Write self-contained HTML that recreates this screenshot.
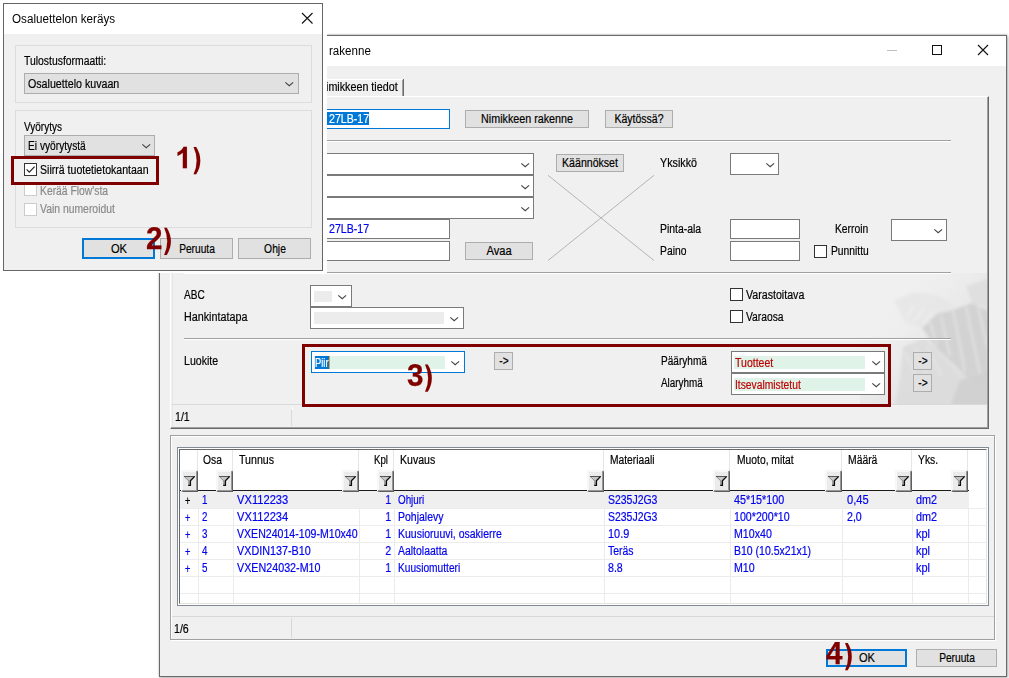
<!DOCTYPE html>
<html><head><meta charset="utf-8"><title>Osaluettelon keräys</title><style>
html,body{margin:0;padding:0;background:#fff;}
body{width:1009px;height:678px;position:relative;overflow:hidden;font-family:"Liberation Sans",sans-serif;font-size:11px;}
#r{position:absolute;left:0;top:0;width:1009px;height:678px;overflow:hidden;}
#r div{position:absolute;box-sizing:border-box;}
#r svg{position:absolute;overflow:visible;}
.t{position:absolute;white-space:pre;font-family:"Liberation Sans",sans-serif;}
.s{-webkit-text-stroke:0.2px currentColor;}
</style></head><body><div id="r">
<div style="left:159px;top:35px;width:848px;height:642px;background:#f0f0f0;border:1px solid #6a6a6a;box-shadow:1px 1px 3px rgba(0,0,0,0.30), 0 0 2px rgba(0,0,0,0.14), 0 -1px 1px rgba(0,0,0,0.08);"></div>
<div style="left:160px;top:36px;width:846px;height:30px;background:#fff;"></div>
<span class="t" id="t1" style="left:329.2px;top:43.40px;font-size:12.00px;line-height:16px;color:#000;font-weight:normal;transform:scaleX(0.9651);transform-origin:0 50%;">rakenne</span>
<div style="left:887px;top:50px;width:10px;height:1px;background:#c0c0c0;"></div>
<div style="left:932px;top:45px;width:10px;height:10px;border:1px solid #111;"></div>
<svg style="left:978px;top:45px" width="10" height="10" viewBox="0 0 10 10"><path d="M0,0 L10,10 M10,0 L0,10" stroke="#111" stroke-width="1.1" fill="none"/></svg>
<div style="left:327px;top:79px;width:75px;height:1px;background:#fff;"></div>
<span class="t s" id="t2" style="left:326.3px;top:79.49px;font-size:12.48px;line-height:16px;color:#000;font-weight:normal;transform:scaleX(0.8614);transform-origin:0 50%;">imikkeen tiedot</span>
<div style="left:403px;top:79px;width:1px;height:17px;background:#696969;"></div>
<div style="left:402px;top:80px;width:1px;height:16px;background:#a0a0a0;"></div>
<div style="left:170px;top:96px;width:819px;height:333px;background:#f0f0f0;border-top:1px solid #fff;border-left:1px solid #fff;border-right:1px solid #696969;border-bottom:1px solid #696969;"></div>
<div style="left:171px;top:97px;width:817px;height:331px;border-right:1px solid #a0a0a0;border-bottom:1px solid #a0a0a0;"></div>
<div style="left:172px;top:273px;width:1px;height:154px;background:#e6e6e6;"></div>
<svg style="left:860px;top:273px" width="127" height="131" viewBox="860 273 127 131">
<defs><filter id="wb" x="-20%" y="-20%" width="140%" height="140%"><feGaussianBlur stdDeviation="1.6"/></filter>
<linearGradient id="wg" x1="0" y1="0" x2="1" y2="1"><stop offset="0.25" stop-color="#e8e8e8" stop-opacity="0"/><stop offset="0.7" stop-color="#e0e0e0" stop-opacity="0.9"/><stop offset="1" stop-color="#d6d6d6" stop-opacity="1"/></linearGradient>
<clipPath id="wc"><rect x="860" y="273" width="127" height="131"/></clipPath></defs>
<g clip-path="url(#wc)">
<rect x="860" y="273" width="127" height="131" fill="url(#wg)"/>
<g filter="url(#wb)">
<polygon points="894,300 915,292 940,296 956,306 938,316 922,328 905,322" fill="#e7e7e7" opacity="0.9"/>
<polygon points="922,328 937,314 953,310 972,303 990,312 990,378 972,382 955,365 937,349" fill="#d2d2d2" opacity="0.95"/>
<polygon points="903,347 925,338 948,362 960,380 990,384 990,408 895,408 900,380" fill="#dbdbdb" opacity="0.9"/>
<polygon points="960,380 990,372 990,408 950,408" fill="#cfcfcf" opacity="0.9"/>
<polygon points="966,286 990,278 990,308 972,303" fill="#dedede" opacity="0.9"/>
<path d="M930,322 L937,345 M941,316 L950,356 M953,311 L965,372 M966,306 L980,374 M978,306 L988,350" stroke="#e2e2e2" stroke-width="2.2" fill="none" opacity="0.9"/>
<path d="M906,318 L914,306 M914,322 L924,308 M924,324 L933,312" stroke="#f0f0f0" stroke-width="2" fill="none" opacity="0.8"/>
<path d="M905,352 L916,376 M915,347 L928,378 M927,346 L941,376" stroke="#e6e6e6" stroke-width="2" fill="none" opacity="0.8"/>
</g></g></svg>
<div style="left:310px;top:109px;width:140px;height:19.5px;background:#fff;border:1px solid #0078d7;"></div>
<div style="left:313px;top:112px;width:56px;height:13px;background:#0078d7;"></div>
<span class="t s" id="t3" style="left:328.5px;top:110.99px;font-size:12.48px;line-height:16px;color:#fff;font-weight:normal;transform:scaleX(0.8511);transform-origin:0 50%;">27LB-17</span>
<div style="left:465px;top:110px;width:123.5px;height:17.5px;background:#e1e1e1;border:1px solid #adadad;"></div>
<span class="t s" id="t4" style="left:526.75px;top:111.14px;font-size:12.48px;line-height:16px;color:#000;font-weight:normal;transform:translateX(-50%) scaleX(0.8598);transform-origin:50% 50%;">Nimikkeen rakenne</span>
<div style="left:605px;top:110px;width:68px;height:17.5px;background:#e1e1e1;border:1px solid #adadad;"></div>
<span class="t s" id="t5" style="left:639.0px;top:111.14px;font-size:12.48px;line-height:16px;color:#000;font-weight:normal;transform:translateX(-50%) scaleX(0.8448);transform-origin:50% 50%;">Käytössä?</span>
<div style="left:184px;top:140px;width:767px;height:1px;background:#a0a0a0;"></div>
<div style="left:184px;top:141px;width:767px;height:1px;background:#fff;"></div>
<div style="left:310px;top:153px;width:224px;height:22px;background:#fff;border:1px solid #7a7a7a;"></div>
<svg style="left:520.5999999999999px;top:162.9px" width="8.4" height="4.2" viewBox="0 0 8.4 4.2"><path d="M0.3,0.3 L4.2,3.7 L8.1,0.3" fill="none" stroke="#444" stroke-width="1.1"/></svg>
<div style="left:310px;top:175px;width:224px;height:22px;background:#fff;border:1px solid #7a7a7a;"></div>
<svg style="left:520.5999999999999px;top:184.9px" width="8.4" height="4.2" viewBox="0 0 8.4 4.2"><path d="M0.3,0.3 L4.2,3.7 L8.1,0.3" fill="none" stroke="#444" stroke-width="1.1"/></svg>
<div style="left:310px;top:197px;width:224px;height:22px;background:#fff;border:1px solid #7a7a7a;"></div>
<svg style="left:520.5999999999999px;top:206.9px" width="8.4" height="4.2" viewBox="0 0 8.4 4.2"><path d="M0.3,0.3 L4.2,3.7 L8.1,0.3" fill="none" stroke="#444" stroke-width="1.1"/></svg>
<div style="left:556px;top:154px;width:68px;height:18px;background:#e1e1e1;border:1px solid #adadad;"></div>
<span class="t s" id="t6" style="left:590.0px;top:155.39px;font-size:12.48px;line-height:16px;color:#000;font-weight:normal;transform:translateX(-50%) scaleX(0.8485);transform-origin:50% 50%;">Käännökset</span>
<svg style="left:0;top:0" width="1009" height="678"><path d="M548,175.3 L654,260.5 M654,175.3 L548,260.5" stroke="#b4b4b4" stroke-width="1" fill="none"/></svg>
<span class="t s" id="t7" style="left:660px;top:155.39px;font-size:12.48px;line-height:16px;color:#000;font-weight:normal;transform:scaleX(0.8605);transform-origin:0 50%;">Yksikkö</span>
<div style="left:730px;top:153px;width:49px;height:22px;background:#fff;border:1px solid #7a7a7a;"></div>
<svg style="left:765.5999999999999px;top:162.9px" width="8.4" height="4.2" viewBox="0 0 8.4 4.2"><path d="M0.3,0.3 L4.2,3.7 L8.1,0.3" fill="none" stroke="#444" stroke-width="1.1"/></svg>
<span class="t s" id="t8" style="left:660px;top:220.89px;font-size:12.48px;line-height:16px;color:#000;font-weight:normal;transform:scaleX(0.8367);transform-origin:0 50%;">Pinta-ala</span>
<div style="left:730px;top:219px;width:70px;height:20px;background:#fff;border:1px solid #7a7a7a;"></div>
<span class="t s" id="t9" style="left:660px;top:243.39px;font-size:12.48px;line-height:16px;color:#000;font-weight:normal;transform:scaleX(0.8281);transform-origin:0 50%;">Paino</span>
<div style="left:730px;top:241px;width:70px;height:20px;background:#fff;border:1px solid #7a7a7a;"></div>
<span class="t s" id="t10" style="left:835px;top:220.89px;font-size:12.48px;line-height:16px;color:#000;font-weight:normal;transform:scaleX(0.825);transform-origin:0 50%;">Kerroin</span>
<div style="left:891px;top:219px;width:56px;height:22px;background:#fff;border:1px solid #7a7a7a;"></div>
<svg style="left:933.5999999999999px;top:228.9px" width="8.4" height="4.2" viewBox="0 0 8.4 4.2"><path d="M0.3,0.3 L4.2,3.7 L8.1,0.3" fill="none" stroke="#444" stroke-width="1.1"/></svg>
<div style="left:814px;top:245px;width:13px;height:13px;background:#fff;border:1px solid #333;"></div>
<span class="t s" id="t11" style="left:830.6px;top:243.39px;font-size:12.48px;line-height:16px;color:#000;font-weight:normal;transform:scaleX(0.8261);transform-origin:0 50%;">Punnittu</span>
<div style="left:310px;top:219px;width:140px;height:20px;background:#fff;border:1px solid #7a7a7a;"></div>
<span class="t s" id="t12" style="left:328.5px;top:221.39px;font-size:12.48px;line-height:16px;color:#0000f0;font-weight:normal;transform:scaleX(0.8511);transform-origin:0 50%;">27LB-17</span>
<div style="left:310px;top:241px;width:140px;height:20px;background:#fff;border:1px solid #7a7a7a;"></div>
<div style="left:465px;top:242px;width:67.5px;height:17.5px;background:#e1e1e1;border:1px solid #adadad;"></div>
<span class="t s" id="t13" style="left:498.75px;top:243.14px;font-size:12.48px;line-height:16px;color:#000;font-weight:normal;transform:translateX(-50%) scaleX(0.8929);transform-origin:50% 50%;">Avaa</span>
<div style="left:184px;top:272px;width:767px;height:1px;background:#a0a0a0;"></div>
<div style="left:184px;top:273px;width:767px;height:1px;background:#fff;"></div>
<span class="t s" id="t14" style="left:184px;top:286.89px;font-size:12.48px;line-height:16px;color:#000;font-weight:normal;transform:scaleX(0.8077);transform-origin:0 50%;">ABC</span>
<div style="left:310px;top:285px;width:41.5px;height:21.5px;background:#fff;border:1px solid #7a7a7a;"></div>
<div style="left:313.5px;top:290.5px;width:18.5px;height:11.5px;background:#ececec;"></div>
<svg style="left:338.1px;top:294.65px" width="8.4" height="4.2" viewBox="0 0 8.4 4.2"><path d="M0.3,0.3 L4.2,3.7 L8.1,0.3" fill="none" stroke="#444" stroke-width="1.1"/></svg>
<span class="t s" id="t15" style="left:184px;top:309.39px;font-size:12.48px;line-height:16px;color:#000;font-weight:normal;transform:scaleX(0.863);transform-origin:0 50%;">Hankintatapa</span>
<div style="left:310px;top:307px;width:153.5px;height:21.5px;background:#fff;border:1px solid #7a7a7a;"></div>
<div style="left:313.5px;top:311.5px;width:130.0px;height:12.5px;background:#ececec;"></div>
<svg style="left:450.1px;top:316.65px" width="8.4" height="4.2" viewBox="0 0 8.4 4.2"><path d="M0.3,0.3 L4.2,3.7 L8.1,0.3" fill="none" stroke="#444" stroke-width="1.1"/></svg>
<div style="left:730px;top:288px;width:13px;height:13px;background:#fff;border:1px solid #333;"></div>
<span class="t s" id="t16" style="left:746px;top:286.89px;font-size:12.48px;line-height:16px;color:#000;font-weight:normal;transform:scaleX(0.8529);transform-origin:0 50%;">Varastoitava</span>
<div style="left:730px;top:310px;width:13px;height:13px;background:#fff;border:1px solid #333;"></div>
<span class="t s" id="t17" style="left:746px;top:308.89px;font-size:12.48px;line-height:16px;color:#000;font-weight:normal;transform:scaleX(0.8261);transform-origin:0 50%;">Varaosa</span>
<div style="left:184px;top:338px;width:767px;height:1px;background:#a0a0a0;"></div>
<div style="left:184px;top:339px;width:767px;height:1px;background:#fff;"></div>
<span class="t s" id="t18" style="left:184px;top:352.89px;font-size:12.48px;line-height:16px;color:#000;font-weight:normal;transform:scaleX(0.85);transform-origin:0 50%;">Luokite</span>
<div style="left:311px;top:351px;width:153.5px;height:21.5px;background:#fff;border:1px solid #0078d7;"></div>
<div style="left:314px;top:356px;width:131px;height:12.5px;background:#e0f3e9;"></div>
<svg style="left:451.1px;top:360.65px" width="8.4" height="4.2" viewBox="0 0 8.4 4.2"><path d="M0.3,0.3 L4.2,3.7 L8.1,0.3" fill="none" stroke="#444" stroke-width="1.1"/></svg>
<div style="left:315px;top:356px;width:14px;height:12.5px;background:#0078d7;"></div>
<span class="t s" id="t19" style="left:315.4px;top:354.59px;font-size:12.48px;line-height:16px;color:#fff;font-weight:normal;transform:scaleX(0.75);transform-origin:0 50%;">Piir</span>
<div style="left:329px;top:356px;width:1px;height:12.5px;background:#f39a2b;"></div>
<div style="left:494px;top:352px;width:19px;height:18px;background:#e1e1e1;border:1px solid #adadad;"></div>
<span class="t s" id="t20" style="left:503.5px;top:353.39px;font-size:12.48px;line-height:16px;color:#000;font-weight:normal;transform:translateX(-50%) scaleX(0.8182);transform-origin:50% 50%;">-&gt;</span>
<span class="t s" id="t21" style="left:661px;top:353.39px;font-size:12.48px;line-height:16px;color:#000;font-weight:normal;transform:scaleX(0.807);transform-origin:0 50%;">Pääryhmä</span>
<div style="left:731px;top:351px;width:154px;height:22px;background:#fff;border:1px solid #7a7a7a;"></div>
<div style="left:733.5px;top:356px;width:131.5px;height:12.5px;background:#e0f3e9;"></div>
<svg style="left:871.5999999999999px;top:360.9px" width="8.4" height="4.2" viewBox="0 0 8.4 4.2"><path d="M0.3,0.3 L4.2,3.7 L8.1,0.3" fill="none" stroke="#444" stroke-width="1.1"/></svg>
<span class="t s" id="t22" style="left:735.4px;top:354.89px;font-size:12.48px;line-height:16px;color:#c00000;font-weight:normal;transform:scaleX(0.8444);transform-origin:0 50%;">Tuotteet</span>
<span class="t s" id="t23" style="left:661px;top:374.99px;font-size:12.48px;line-height:16px;color:#000;font-weight:normal;transform:scaleX(0.7925);transform-origin:0 50%;">Alaryhmä</span>
<div style="left:731px;top:373px;width:154px;height:22px;background:#fff;border:1px solid #7a7a7a;"></div>
<div style="left:733.5px;top:378px;width:131.5px;height:12.5px;background:#e0f3e9;"></div>
<svg style="left:871.5999999999999px;top:382.9px" width="8.4" height="4.2" viewBox="0 0 8.4 4.2"><path d="M0.3,0.3 L4.2,3.7 L8.1,0.3" fill="none" stroke="#444" stroke-width="1.1"/></svg>
<span class="t s" id="t24" style="left:735.4px;top:376.89px;font-size:12.48px;line-height:16px;color:#c00000;font-weight:normal;transform:scaleX(0.825);transform-origin:0 50%;">Itsevalmistetut</span>
<div style="left:913px;top:352px;width:19px;height:18px;background:#e1e1e1;border:1px solid #adadad;"></div>
<span class="t s" id="t25" style="left:922.5px;top:353.39px;font-size:12.48px;line-height:16px;color:#000;font-weight:normal;transform:translateX(-50%) scaleX(0.8182);transform-origin:50% 50%;">-&gt;</span>
<div style="left:913px;top:374px;width:19px;height:18px;background:#e1e1e1;border:1px solid #adadad;"></div>
<span class="t s" id="t26" style="left:922.5px;top:375.39px;font-size:12.48px;line-height:16px;color:#000;font-weight:normal;transform:translateX(-50%) scaleX(0.8182);transform-origin:50% 50%;">-&gt;</span>
<div style="left:172px;top:404px;width:815px;height:1px;background:#dadada;"></div>
<div style="left:291px;top:410px;width:1px;height:16px;background:#dadada;"></div>
<div style="left:292px;top:406px;width:1px;height:4px;background:#fbfbfb;"></div>
<span class="t s" id="t27" style="left:174.7px;top:409.09px;font-size:12.48px;line-height:16px;color:#000;font-weight:normal;transform:scaleX(0.8529);transform-origin:0 50%;">1/1</span>
<div style="left:302px;top:344px;width:589px;height:63px;border:3px solid #800000;"></div>
<span class="t" style="left:406.60px;top:359.99px;font-size:30.60px;line-height:30.60px;color:#800000;font-weight:bold;-webkit-text-stroke:0.25px #800000;transform:scaleX(0.97);transform-origin:0 50%;">3</span>
<svg style="left:0;top:0" width="1009" height="678"><g fill="#800000" stroke="#800000" stroke-width="6"><path transform="translate(423.77,385.7) scale(0.01465,-0.01465)" d="M90,1440 H268 Q548,1000 548,510 Q548,30 268,-418 H90 Q300,40 300,510 Q300,990 90,1440 Z"/></g></svg>
<div style="left:171px;top:436px;width:825px;height:205px;border:1px solid #fff;"></div>
<div style="left:170px;top:435px;width:825px;height:205px;border:1px solid #a0a0a0;"></div>
<div style="left:177px;top:447px;width:812px;height:159px;background:#fff;border:1px solid #828a96;"></div>
<div style="left:179px;top:449px;width:808px;height:155px;border-top:1px solid #696969;border-left:1px solid #696969;border-right:1px solid #e3e3e3;border-bottom:1px solid #e3e3e3;"></div>
<div style="left:197px;top:450px;width:1px;height:41px;background:#e6e6e6;"></div>
<div style="left:198px;top:491px;width:1px;height:112px;background:#ebebeb;"></div>
<div style="left:232px;top:450px;width:1px;height:41px;background:#e6e6e6;"></div>
<div style="left:233px;top:491px;width:1px;height:112px;background:#ebebeb;"></div>
<div style="left:358px;top:450px;width:1px;height:41px;background:#e6e6e6;"></div>
<div style="left:359px;top:491px;width:1px;height:112px;background:#ebebeb;"></div>
<div style="left:393px;top:450px;width:1px;height:41px;background:#e6e6e6;"></div>
<div style="left:394px;top:491px;width:1px;height:112px;background:#ebebeb;"></div>
<div style="left:603px;top:450px;width:1px;height:41px;background:#e6e6e6;"></div>
<div style="left:604px;top:491px;width:1px;height:112px;background:#ebebeb;"></div>
<div style="left:729px;top:450px;width:1px;height:41px;background:#e6e6e6;"></div>
<div style="left:730px;top:491px;width:1px;height:112px;background:#ebebeb;"></div>
<div style="left:841px;top:450px;width:1px;height:41px;background:#e6e6e6;"></div>
<div style="left:842px;top:491px;width:1px;height:112px;background:#ebebeb;"></div>
<div style="left:911px;top:450px;width:1px;height:41px;background:#e6e6e6;"></div>
<div style="left:912px;top:491px;width:1px;height:112px;background:#ebebeb;"></div>
<div style="left:967px;top:450px;width:1px;height:41px;background:#e6e6e6;"></div>
<div style="left:968px;top:491px;width:1px;height:112px;background:#ebebeb;"></div>
<div style="left:180px;top:508px;width:807px;height:1px;background:#ececec;"></div>
<div style="left:180px;top:525px;width:807px;height:1px;background:#ececec;"></div>
<div style="left:180px;top:542px;width:807px;height:1px;background:#ececec;"></div>
<div style="left:180px;top:559px;width:807px;height:1px;background:#ececec;"></div>
<div style="left:180px;top:576px;width:807px;height:1px;background:#ececec;"></div>
<div style="left:180px;top:593px;width:807px;height:1px;background:#ececec;"></div>
<div style="left:180px;top:491px;width:789px;height:17px;background:#efefef;"></div>
<div style="left:180px;top:490px;width:789px;height:1px;background:#1a1a1a;"></div>
<span class="t s" id="t28" style="left:203px;top:452.09px;font-size:12.48px;line-height:16px;color:#000;font-weight:normal;transform:scaleX(0.8261);transform-origin:0 50%;">Osa</span>
<span class="t s" id="t29" style="left:239px;top:452.09px;font-size:12.48px;line-height:16px;color:#000;font-weight:normal;transform:scaleX(0.8537);transform-origin:0 50%;">Tunnus</span>
<span class="t s" id="t30" style="left:373.5px;top:452.09px;font-size:12.48px;line-height:16px;color:#000;font-weight:normal;transform:scaleX(0.7778);transform-origin:0 50%;">Kpl</span>
<span class="t s" id="t31" style="left:400.2px;top:452.09px;font-size:12.48px;line-height:16px;color:#000;font-weight:normal;transform:scaleX(0.8452);transform-origin:0 50%;">Kuvaus</span>
<span class="t s" id="t32" style="left:610.2px;top:452.09px;font-size:12.48px;line-height:16px;color:#000;font-weight:normal;transform:scaleX(0.8222);transform-origin:0 50%;">Materiaali</span>
<span class="t s" id="t33" style="left:736.5px;top:452.09px;font-size:12.48px;line-height:16px;color:#000;font-weight:normal;transform:scaleX(0.8261);transform-origin:0 50%;">Muoto, mitat</span>
<span class="t s" id="t34" style="left:848.2px;top:452.09px;font-size:12.48px;line-height:16px;color:#000;font-weight:normal;transform:scaleX(0.8314);transform-origin:0 50%;">Määrä</span>
<span class="t s" id="t35" style="left:918.3px;top:452.09px;font-size:12.48px;line-height:16px;color:#000;font-weight:normal;transform:scaleX(0.8292);transform-origin:0 50%;">Yks.</span>
<div style="left:181px;top:470px;width:17px;height:22px;background:#ebebeb;border-top:2px solid #f7f7f7;border-left:2px solid #f7f7f7;border-right:1px solid #5e5e5e;border-bottom:1px solid #5e5e5e;"></div>
<div style="left:182px;top:471px;width:15px;height:20px;border-right:1px solid #989898;border-bottom:1px solid #989898;"></div>
<svg style="left:181px;top:470px" width="17" height="22" viewBox="0 0 17 22"><path d="M3.5,6.5 L13.5,6.5 L9.2,11 L9.2,15.4 L7.6,15.4 L7.6,11 Z" fill="#c6c6c6"/><path d="M3.4,6.6 L7.8,11 L7.8,15" stroke="#8a8a8a" stroke-width="1" fill="none"/><path d="M3,6.5 L13.4,6.5" stroke="#555" stroke-width="1" fill="none"/><path d="M13.7,6.4 L9.4,10.8 L9.4,15.3 L7.2,15.3" stroke="#0c0c0c" stroke-width="1.35" fill="none"/></svg>
<div style="left:216px;top:470px;width:17px;height:22px;background:#ebebeb;border-top:2px solid #f7f7f7;border-left:2px solid #f7f7f7;border-right:1px solid #5e5e5e;border-bottom:1px solid #5e5e5e;"></div>
<div style="left:217px;top:471px;width:15px;height:20px;border-right:1px solid #989898;border-bottom:1px solid #989898;"></div>
<svg style="left:216px;top:470px" width="17" height="22" viewBox="0 0 17 22"><path d="M3.5,6.5 L13.5,6.5 L9.2,11 L9.2,15.4 L7.6,15.4 L7.6,11 Z" fill="#c6c6c6"/><path d="M3.4,6.6 L7.8,11 L7.8,15" stroke="#8a8a8a" stroke-width="1" fill="none"/><path d="M3,6.5 L13.4,6.5" stroke="#555" stroke-width="1" fill="none"/><path d="M13.7,6.4 L9.4,10.8 L9.4,15.3 L7.2,15.3" stroke="#0c0c0c" stroke-width="1.35" fill="none"/></svg>
<div style="left:342px;top:470px;width:17px;height:22px;background:#ebebeb;border-top:2px solid #f7f7f7;border-left:2px solid #f7f7f7;border-right:1px solid #5e5e5e;border-bottom:1px solid #5e5e5e;"></div>
<div style="left:343px;top:471px;width:15px;height:20px;border-right:1px solid #989898;border-bottom:1px solid #989898;"></div>
<svg style="left:342px;top:470px" width="17" height="22" viewBox="0 0 17 22"><path d="M3.5,6.5 L13.5,6.5 L9.2,11 L9.2,15.4 L7.6,15.4 L7.6,11 Z" fill="#c6c6c6"/><path d="M3.4,6.6 L7.8,11 L7.8,15" stroke="#8a8a8a" stroke-width="1" fill="none"/><path d="M3,6.5 L13.4,6.5" stroke="#555" stroke-width="1" fill="none"/><path d="M13.7,6.4 L9.4,10.8 L9.4,15.3 L7.2,15.3" stroke="#0c0c0c" stroke-width="1.35" fill="none"/></svg>
<div style="left:377px;top:470px;width:17px;height:22px;background:#ebebeb;border-top:2px solid #f7f7f7;border-left:2px solid #f7f7f7;border-right:1px solid #5e5e5e;border-bottom:1px solid #5e5e5e;"></div>
<div style="left:378px;top:471px;width:15px;height:20px;border-right:1px solid #989898;border-bottom:1px solid #989898;"></div>
<svg style="left:377px;top:470px" width="17" height="22" viewBox="0 0 17 22"><path d="M3.5,6.5 L13.5,6.5 L9.2,11 L9.2,15.4 L7.6,15.4 L7.6,11 Z" fill="#c6c6c6"/><path d="M3.4,6.6 L7.8,11 L7.8,15" stroke="#8a8a8a" stroke-width="1" fill="none"/><path d="M3,6.5 L13.4,6.5" stroke="#555" stroke-width="1" fill="none"/><path d="M13.7,6.4 L9.4,10.8 L9.4,15.3 L7.2,15.3" stroke="#0c0c0c" stroke-width="1.35" fill="none"/></svg>
<div style="left:587px;top:470px;width:17px;height:22px;background:#ebebeb;border-top:2px solid #f7f7f7;border-left:2px solid #f7f7f7;border-right:1px solid #5e5e5e;border-bottom:1px solid #5e5e5e;"></div>
<div style="left:588px;top:471px;width:15px;height:20px;border-right:1px solid #989898;border-bottom:1px solid #989898;"></div>
<svg style="left:587px;top:470px" width="17" height="22" viewBox="0 0 17 22"><path d="M3.5,6.5 L13.5,6.5 L9.2,11 L9.2,15.4 L7.6,15.4 L7.6,11 Z" fill="#c6c6c6"/><path d="M3.4,6.6 L7.8,11 L7.8,15" stroke="#8a8a8a" stroke-width="1" fill="none"/><path d="M3,6.5 L13.4,6.5" stroke="#555" stroke-width="1" fill="none"/><path d="M13.7,6.4 L9.4,10.8 L9.4,15.3 L7.2,15.3" stroke="#0c0c0c" stroke-width="1.35" fill="none"/></svg>
<div style="left:713px;top:470px;width:17px;height:22px;background:#ebebeb;border-top:2px solid #f7f7f7;border-left:2px solid #f7f7f7;border-right:1px solid #5e5e5e;border-bottom:1px solid #5e5e5e;"></div>
<div style="left:714px;top:471px;width:15px;height:20px;border-right:1px solid #989898;border-bottom:1px solid #989898;"></div>
<svg style="left:713px;top:470px" width="17" height="22" viewBox="0 0 17 22"><path d="M3.5,6.5 L13.5,6.5 L9.2,11 L9.2,15.4 L7.6,15.4 L7.6,11 Z" fill="#c6c6c6"/><path d="M3.4,6.6 L7.8,11 L7.8,15" stroke="#8a8a8a" stroke-width="1" fill="none"/><path d="M3,6.5 L13.4,6.5" stroke="#555" stroke-width="1" fill="none"/><path d="M13.7,6.4 L9.4,10.8 L9.4,15.3 L7.2,15.3" stroke="#0c0c0c" stroke-width="1.35" fill="none"/></svg>
<div style="left:825px;top:470px;width:17px;height:22px;background:#ebebeb;border-top:2px solid #f7f7f7;border-left:2px solid #f7f7f7;border-right:1px solid #5e5e5e;border-bottom:1px solid #5e5e5e;"></div>
<div style="left:826px;top:471px;width:15px;height:20px;border-right:1px solid #989898;border-bottom:1px solid #989898;"></div>
<svg style="left:825px;top:470px" width="17" height="22" viewBox="0 0 17 22"><path d="M3.5,6.5 L13.5,6.5 L9.2,11 L9.2,15.4 L7.6,15.4 L7.6,11 Z" fill="#c6c6c6"/><path d="M3.4,6.6 L7.8,11 L7.8,15" stroke="#8a8a8a" stroke-width="1" fill="none"/><path d="M3,6.5 L13.4,6.5" stroke="#555" stroke-width="1" fill="none"/><path d="M13.7,6.4 L9.4,10.8 L9.4,15.3 L7.2,15.3" stroke="#0c0c0c" stroke-width="1.35" fill="none"/></svg>
<div style="left:895px;top:470px;width:17px;height:22px;background:#ebebeb;border-top:2px solid #f7f7f7;border-left:2px solid #f7f7f7;border-right:1px solid #5e5e5e;border-bottom:1px solid #5e5e5e;"></div>
<div style="left:896px;top:471px;width:15px;height:20px;border-right:1px solid #989898;border-bottom:1px solid #989898;"></div>
<svg style="left:895px;top:470px" width="17" height="22" viewBox="0 0 17 22"><path d="M3.5,6.5 L13.5,6.5 L9.2,11 L9.2,15.4 L7.6,15.4 L7.6,11 Z" fill="#c6c6c6"/><path d="M3.4,6.6 L7.8,11 L7.8,15" stroke="#8a8a8a" stroke-width="1" fill="none"/><path d="M3,6.5 L13.4,6.5" stroke="#555" stroke-width="1" fill="none"/><path d="M13.7,6.4 L9.4,10.8 L9.4,15.3 L7.2,15.3" stroke="#0c0c0c" stroke-width="1.35" fill="none"/></svg>
<div style="left:951px;top:470px;width:17px;height:22px;background:#ebebeb;border-top:2px solid #f7f7f7;border-left:2px solid #f7f7f7;border-right:1px solid #5e5e5e;border-bottom:1px solid #5e5e5e;"></div>
<div style="left:952px;top:471px;width:15px;height:20px;border-right:1px solid #989898;border-bottom:1px solid #989898;"></div>
<svg style="left:951px;top:470px" width="17" height="22" viewBox="0 0 17 22"><path d="M3.5,6.5 L13.5,6.5 L9.2,11 L9.2,15.4 L7.6,15.4 L7.6,11 Z" fill="#c6c6c6"/><path d="M3.4,6.6 L7.8,11 L7.8,15" stroke="#8a8a8a" stroke-width="1" fill="none"/><path d="M3,6.5 L13.4,6.5" stroke="#555" stroke-width="1" fill="none"/><path d="M13.7,6.4 L9.4,10.8 L9.4,15.3 L7.2,15.3" stroke="#0c0c0c" stroke-width="1.35" fill="none"/></svg>
<span class="t s" id="t36" style="left:185.3px;top:492.69px;font-size:12.48px;line-height:16px;color:#000;font-weight:normal;transform:scaleX(0.7429);transform-origin:0 50%;">+</span>
<span class="t s" id="t37" style="left:202px;top:492.29px;font-size:12.48px;line-height:16px;color:#0000f0;font-weight:normal;transform:scaleX(0.7857);transform-origin:0 50%;">1</span>
<span class="t s" id="t38" style="left:237.4px;top:492.29px;font-size:12.48px;line-height:16px;color:#0000f0;font-weight:normal;transform:scaleX(0.8947);transform-origin:0 50%;">VX112233</span>
<span class="t s" id="t39" style="left:390.6px;top:492.29px;font-size:12.48px;line-height:16px;color:#0000f0;font-weight:normal;transform:translateX(-100%) scaleX(0.8286);transform-origin:100% 50%;">1</span>
<span class="t s" id="t40" style="left:398px;top:492.29px;font-size:12.48px;line-height:16px;color:#0000f0;font-weight:normal;transform:scaleX(0.7879);transform-origin:0 50%;">Ohjuri</span>
<span class="t s" id="t41" style="left:608px;top:492.29px;font-size:12.48px;line-height:16px;color:#0000f0;font-weight:normal;transform:scaleX(0.839);transform-origin:0 50%;">S235J2G3</span>
<span class="t s" id="t42" style="left:734px;top:492.29px;font-size:12.48px;line-height:16px;color:#0000f0;font-weight:normal;transform:scaleX(0.8621);transform-origin:0 50%;">45*15*100</span>
<span class="t s" id="t43" style="left:846.6px;top:492.29px;font-size:12.48px;line-height:16px;color:#0000f0;font-weight:normal;transform:scaleX(0.8917);transform-origin:0 50%;">0,45</span>
<span class="t s" id="t44" style="left:915.9px;top:492.29px;font-size:12.48px;line-height:16px;color:#0000f0;font-weight:normal;transform:scaleX(0.8667);transform-origin:0 50%;">dm2</span>
<span class="t s" id="t45" style="left:185.3px;top:509.69px;font-size:12.48px;line-height:16px;color:#0000f0;font-weight:normal;transform:scaleX(0.7429);transform-origin:0 50%;">+</span>
<span class="t s" id="t46" style="left:202px;top:509.29px;font-size:12.48px;line-height:16px;color:#0000f0;font-weight:normal;transform:scaleX(0.7857);transform-origin:0 50%;">2</span>
<span class="t s" id="t47" style="left:237.4px;top:509.29px;font-size:12.48px;line-height:16px;color:#0000f0;font-weight:normal;transform:scaleX(0.8947);transform-origin:0 50%;">VX112234</span>
<span class="t s" id="t48" style="left:390.6px;top:509.29px;font-size:12.48px;line-height:16px;color:#0000f0;font-weight:normal;transform:translateX(-100%) scaleX(0.8286);transform-origin:100% 50%;">1</span>
<span class="t s" id="t49" style="left:398px;top:509.29px;font-size:12.48px;line-height:16px;color:#0000f0;font-weight:normal;transform:scaleX(0.8426);transform-origin:0 50%;">Pohjalevy</span>
<span class="t s" id="t50" style="left:608px;top:509.29px;font-size:12.48px;line-height:16px;color:#0000f0;font-weight:normal;transform:scaleX(0.839);transform-origin:0 50%;">S235J2G3</span>
<span class="t s" id="t51" style="left:734px;top:509.29px;font-size:12.48px;line-height:16px;color:#0000f0;font-weight:normal;transform:scaleX(0.8538);transform-origin:0 50%;">100*200*10</span>
<span class="t s" id="t52" style="left:846.6px;top:509.29px;font-size:12.48px;line-height:16px;color:#0000f0;font-weight:normal;transform:scaleX(0.8529);transform-origin:0 50%;">2,0</span>
<span class="t s" id="t53" style="left:915.9px;top:509.29px;font-size:12.48px;line-height:16px;color:#0000f0;font-weight:normal;transform:scaleX(0.8667);transform-origin:0 50%;">dm2</span>
<span class="t s" id="t54" style="left:185.3px;top:526.69px;font-size:12.48px;line-height:16px;color:#0000f0;font-weight:normal;transform:scaleX(0.7429);transform-origin:0 50%;">+</span>
<span class="t s" id="t55" style="left:202px;top:526.29px;font-size:12.48px;line-height:16px;color:#0000f0;font-weight:normal;transform:scaleX(0.7857);transform-origin:0 50%;">3</span>
<span class="t s" id="t56" style="left:237.4px;top:526.29px;font-size:12.48px;line-height:16px;color:#0000f0;font-weight:normal;transform:scaleX(0.8486);transform-origin:0 50%;">VXEN24014-109-M10x40</span>
<span class="t s" id="t57" style="left:390.6px;top:526.29px;font-size:12.48px;line-height:16px;color:#0000f0;font-weight:normal;transform:translateX(-100%) scaleX(0.8286);transform-origin:100% 50%;">1</span>
<span class="t s" id="t58" style="left:398px;top:526.29px;font-size:12.48px;line-height:16px;color:#0000f0;font-weight:normal;transform:scaleX(0.8415);transform-origin:0 50%;">Kuusioruuvi, osakierre</span>
<span class="t s" id="t59" style="left:608px;top:526.29px;font-size:12.48px;line-height:16px;color:#0000f0;font-weight:normal;transform:scaleX(0.875);transform-origin:0 50%;">10.9</span>
<span class="t s" id="t60" style="left:734px;top:526.29px;font-size:12.48px;line-height:16px;color:#0000f0;font-weight:normal;transform:scaleX(0.8523);transform-origin:0 50%;">M10x40</span>
<span class="t s" id="t61" style="left:915.9px;top:526.29px;font-size:12.48px;line-height:16px;color:#0000f0;font-weight:normal;transform:scaleX(0.875);transform-origin:0 50%;">kpl</span>
<span class="t s" id="t62" style="left:185.3px;top:543.69px;font-size:12.48px;line-height:16px;color:#0000f0;font-weight:normal;transform:scaleX(0.7429);transform-origin:0 50%;">+</span>
<span class="t s" id="t63" style="left:202px;top:543.29px;font-size:12.48px;line-height:16px;color:#0000f0;font-weight:normal;transform:scaleX(0.7857);transform-origin:0 50%;">4</span>
<span class="t s" id="t64" style="left:237.4px;top:543.29px;font-size:12.48px;line-height:16px;color:#0000f0;font-weight:normal;transform:scaleX(0.8647);transform-origin:0 50%;">VXDIN137-B10</span>
<span class="t s" id="t65" style="left:390.6px;top:543.29px;font-size:12.48px;line-height:16px;color:#0000f0;font-weight:normal;transform:translateX(-100%) scaleX(0.8286);transform-origin:100% 50%;">2</span>
<span class="t s" id="t66" style="left:398px;top:543.29px;font-size:12.48px;line-height:16px;color:#0000f0;font-weight:normal;transform:scaleX(0.839);transform-origin:0 50%;">Aaltolaatta</span>
<span class="t s" id="t67" style="left:608px;top:543.29px;font-size:12.48px;line-height:16px;color:#0000f0;font-weight:normal;transform:scaleX(0.8387);transform-origin:0 50%;">Teräs</span>
<span class="t s" id="t68" style="left:734px;top:543.29px;font-size:12.48px;line-height:16px;color:#0000f0;font-weight:normal;transform:scaleX(0.8424);transform-origin:0 50%;">B10 (10.5x21x1)</span>
<span class="t s" id="t69" style="left:915.9px;top:543.29px;font-size:12.48px;line-height:16px;color:#0000f0;font-weight:normal;transform:scaleX(0.875);transform-origin:0 50%;">kpl</span>
<span class="t s" id="t70" style="left:185.3px;top:560.69px;font-size:12.48px;line-height:16px;color:#0000f0;font-weight:normal;transform:scaleX(0.7429);transform-origin:0 50%;">+</span>
<span class="t s" id="t71" style="left:202px;top:560.29px;font-size:12.48px;line-height:16px;color:#0000f0;font-weight:normal;transform:scaleX(0.7857);transform-origin:0 50%;">5</span>
<span class="t s" id="t72" style="left:237.4px;top:560.29px;font-size:12.48px;line-height:16px;color:#0000f0;font-weight:normal;transform:scaleX(0.8608);transform-origin:0 50%;">VXEN24032-M10</span>
<span class="t s" id="t73" style="left:390.6px;top:560.29px;font-size:12.48px;line-height:16px;color:#0000f0;font-weight:normal;transform:translateX(-100%) scaleX(0.8286);transform-origin:100% 50%;">1</span>
<span class="t s" id="t74" style="left:398px;top:560.29px;font-size:12.48px;line-height:16px;color:#0000f0;font-weight:normal;transform:scaleX(0.8158);transform-origin:0 50%;">Kuusiomutteri</span>
<span class="t s" id="t75" style="left:608px;top:560.29px;font-size:12.48px;line-height:16px;color:#0000f0;font-weight:normal;transform:scaleX(0.8529);transform-origin:0 50%;">8.8</span>
<span class="t s" id="t76" style="left:734px;top:560.29px;font-size:12.48px;line-height:16px;color:#0000f0;font-weight:normal;transform:scaleX(0.8542);transform-origin:0 50%;">M10</span>
<span class="t s" id="t77" style="left:915.9px;top:560.29px;font-size:12.48px;line-height:16px;color:#0000f0;font-weight:normal;transform:scaleX(0.875);transform-origin:0 50%;">kpl</span>
<div style="left:172px;top:616px;width:822px;height:1px;background:#d8d8d8;"></div>
<div style="left:291px;top:618px;width:1px;height:20px;background:#d8d8d8;"></div>
<span class="t s" id="t78" style="left:174.3px;top:621.19px;font-size:12.48px;line-height:16px;color:#000;font-weight:normal;transform:scaleX(0.8529);transform-origin:0 50%;">1/6</span>
<div style="left:826px;top:649px;width:81px;height:18px;background:#e1e1e1;border:2px solid #0078d7;"></div>
<span class="t s" id="t79" style="left:866.5px;top:650.39px;font-size:12.48px;line-height:16px;color:#000;font-weight:normal;transform:translateX(-50%) scaleX(0.8889);transform-origin:50% 50%;">OK</span>
<div style="left:916px;top:649px;width:81px;height:18px;background:#e1e1e1;border:1px solid #adadad;"></div>
<span class="t s" id="t80" style="left:956.5px;top:650.39px;font-size:12.48px;line-height:16px;color:#000;font-weight:normal;transform:translateX(-50%) scaleX(0.8182);transform-origin:50% 50%;">Peruuta</span>
<span class="t" style="left:826.00px;top:638.39px;font-size:30.60px;line-height:30.60px;color:#800000;font-weight:bold;-webkit-text-stroke:0.25px #800000;transform:scaleX(0.97);transform-origin:0 50%;">4</span>
<svg style="left:0;top:0" width="1009" height="678"><g fill="#800000" stroke="#800000" stroke-width="6"><path transform="translate(843.77,664.1) scale(0.01465,-0.01465)" d="M90,1440 H268 Q548,1000 548,510 Q548,30 268,-418 H90 Q300,40 300,510 Q300,990 90,1440 Z"/></g></svg>
<div style="left:0px;top:0px;width:327px;height:273px;background:#fff;"></div>
<div style="left:3px;top:3px;width:320px;height:267.5px;background:#f0f0f0;border:1px solid #666;"></div>
<div style="left:4px;top:4px;width:318px;height:30px;background:#fff;"></div>
<span class="t" id="t81" style="left:12.2px;top:11.00px;font-size:12.00px;line-height:16px;color:#000;font-weight:normal;transform:scaleX(0.9717);transform-origin:0 50%;">Osaluettelon keräys</span>
<svg style="left:302px;top:12.5px" width="10.5" height="10.5" viewBox="0 0 10.5 10.5"><path d="M0,0 L10.5,10.5 M10.5,0 L0,10.5" stroke="#111" stroke-width="1.1" fill="none"/></svg>
<div style="left:15px;top:45px;width:297px;height:57.5px;border:1px solid #dcdcdc;"></div>
<span class="t s" id="t82" style="left:24px;top:53.39px;font-size:12.48px;line-height:16px;color:#000;font-weight:normal;transform:scaleX(0.8333);transform-origin:0 50%;">Tulostusformaatti:</span>
<div style="left:24px;top:73px;width:275px;height:20.5px;background:#e1e1e1;border:1px solid #adadad;"></div>
<span class="t s" id="t83" style="left:27.5px;top:76.39px;font-size:12.48px;line-height:16px;color:#000;font-weight:normal;transform:scaleX(0.8551);transform-origin:0 50%;">Osaluettelo kuvaan</span>
<svg style="left:285.25px;top:82.375px" width="8.5" height="4.25" viewBox="0 0 8.5 4.25"><path d="M0.3,0.3 L4.25,3.75 L8.2,0.3" fill="none" stroke="#444" stroke-width="1.1"/></svg>
<div style="left:15px;top:110px;width:297px;height:118px;border:1px solid #dcdcdc;"></div>
<span class="t s" id="t84" style="left:24.4px;top:118.79px;font-size:12.48px;line-height:16px;color:#000;font-weight:normal;transform:scaleX(0.8);transform-origin:0 50%;">Vyörytys</span>
<div style="left:24px;top:135px;width:131px;height:20.5px;background:#e1e1e1;border:1px solid #adadad;"></div>
<span class="t s" id="t85" style="left:28.3px;top:138.09px;font-size:12.48px;line-height:16px;color:#000;font-weight:normal;transform:scaleX(0.8169);transform-origin:0 50%;">Ei vyörytystä</span>
<svg style="left:141.75px;top:143.875px" width="8.5" height="4.25" viewBox="0 0 8.5 4.25"><path d="M0.3,0.3 L4.25,3.75 L8.2,0.3" fill="none" stroke="#444" stroke-width="1.1"/></svg>
<div style="left:24px;top:183px;width:13px;height:13px;background:#fff;border:1px solid #cccccc;"></div>
<span class="t s" id="t86" style="left:40px;top:182.69px;font-size:12.48px;line-height:16px;color:#8a8a8a;font-weight:normal;transform:scaleX(0.8293);transform-origin:0 50%;">Kerää Flow&#x27;sta</span>
<div style="left:24px;top:202.5px;width:13px;height:13px;background:#fff;border:1px solid #cccccc;"></div>
<span class="t s" id="t87" style="left:40px;top:200.69px;font-size:12.48px;line-height:16px;color:#8a8a8a;font-weight:normal;transform:scaleX(0.8333);transform-origin:0 50%;">Vain numeroidut</span>
<div style="left:14.5px;top:159px;width:141.5px;height:23px;background:#f0f0f0;"></div>
<div style="left:24px;top:163px;width:13px;height:13px;background:#fff;border:1px solid #333;"></div>
<svg style="left:24px;top:163px" width="13" height="13" viewBox="0 0 13 13"><path d="M2.6,6.4 L5.3,9.1 L10.6,3.6" fill="none" stroke="#222" stroke-width="1.2"/></svg>
<span class="t s" id="t88" style="left:40px;top:162.29px;font-size:12.48px;line-height:16px;color:#000;font-weight:normal;transform:scaleX(0.8469);transform-origin:0 50%;">Siirrä tuotetietokantaan</span>
<div style="left:11px;top:156px;width:148px;height:29px;border:3px solid #800000;"></div>
<svg style="left:0;top:0" width="1009" height="678"><g fill="#800000" stroke="#800000" stroke-width="6"><path transform="translate(170.51,168.2) scale(0.01465,-0.01465)" d="M1120,0 H839 V1059 Q683,913 477,841 V1096 Q587,1132 715,1231 Q843,1331 891,1466 H1120 Z"/><path transform="translate(192.27,168.2) scale(0.01465,-0.01465)" d="M90,1440 H268 Q548,1000 548,510 Q548,30 268,-418 H90 Q300,40 300,510 Q300,990 90,1440 Z"/></g></svg>
<div style="left:82px;top:238px;width:73px;height:21px;background:#e1e1e1;border:2px solid #0078d7;"></div>
<span class="t s" id="t89" style="left:118.5px;top:240.89px;font-size:12.48px;line-height:16px;color:#000;font-weight:normal;transform:translateX(-50%) scaleX(0.8889);transform-origin:50% 50%;">OK</span>
<div style="left:160px;top:238px;width:73px;height:21px;background:#e1e1e1;border:1px solid #adadad;"></div>
<span class="t s" id="t90" style="left:196.5px;top:240.89px;font-size:12.48px;line-height:16px;color:#000;font-weight:normal;transform:translateX(-50%) scaleX(0.8182);transform-origin:50% 50%;">Peruuta</span>
<div style="left:238px;top:238px;width:73px;height:21px;background:#e1e1e1;border:1px solid #adadad;"></div>
<span class="t s" id="t91" style="left:274.5px;top:240.89px;font-size:12.48px;line-height:16px;color:#000;font-weight:normal;transform:translateX(-50%) scaleX(0.8269);transform-origin:50% 50%;">Ohje</span>
<span class="t" style="left:145.70px;top:223.09px;font-size:30.60px;line-height:30.60px;color:#800000;font-weight:bold;-webkit-text-stroke:0.25px #800000;transform:scaleX(0.97);transform-origin:0 50%;">2</span>
<svg style="left:0;top:0" width="1009" height="678"><g fill="#800000" stroke="#800000" stroke-width="6"><path transform="translate(162.87,248.8) scale(0.01465,-0.01465)" d="M90,1440 H268 Q548,1000 548,510 Q548,30 268,-418 H90 Q300,40 300,510 Q300,990 90,1440 Z"/></g></svg>
</div></body></html>
